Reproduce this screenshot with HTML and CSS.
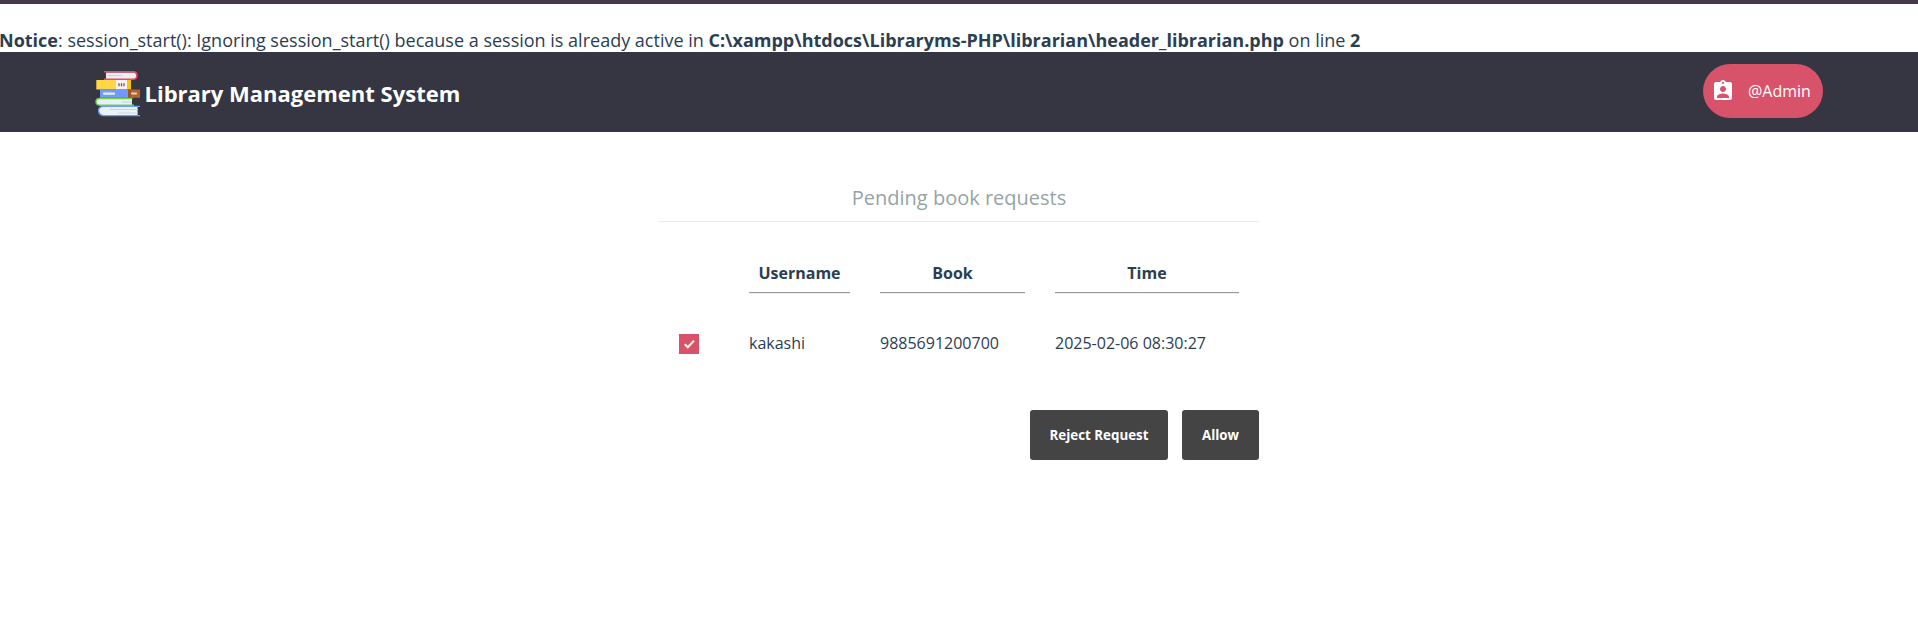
FILE: index.html
```html
<!DOCTYPE html>
<html lang="en">
<head>
<meta charset="utf-8">
<title>Library Management System</title>
<link rel="stylesheet" href="styles.css">
</head>
<body>
<div class="notice"><b>Notice</b>: session_start(): Ignoring session_start() because a session is already active in <b>C:\xampp\htdocs\Libraryms-PHP\librarian\header_librarian.php</b> on line <b>2</b></div>
<header class="header">
  <div class="brand">
    <svg class="logo" width="46" height="46" viewBox="0 0 46 46">
      <path d="M11 1.500H40Q42.500 5 40 8H11V1.500Z" fill="#e8eff6"/>
      <path d="M9 .7H38.500Q42 1 42 4.500T38.500 8.200H9" fill="none" stroke="#f2475f" stroke-width="1.500"/>
      <path d="M12 4.500H27" stroke="#c6d5e4" stroke-width="1"/>
      <path fill="#ffd643" d="M1.300 9H22v9.500H1.300z"/>
      <path fill="#fff1ed" d="M21 9h11v9.500H21z"/>
      <path fill="#fac600" d="M32 9h4v9.500h-4z"/>
      <path d="M24 12.300v3M26.500 12.300v3M29 12.300v3" stroke="#59606d" stroke-width="1.300"/>
      <path fill="#719aff" d="M5 18.500h28v8.300H5z"/>
      <path fill="#9b562e" d="M33 18.500h4v8.300h-4z"/>
      <path fill="#b2642f" d="M36 18.500h9v8.300h-9z"/>
      <rect x="8" y="21.500" width="12" height="2.200" rx="1" fill="#e8f1fc"/>
      <rect x="36" y="21.500" width="6" height="2" rx="1" fill="#f7cfba"/>
      <path fill="#e9f1f6" d="M5 27.300h32v7H5Q1 34 1 30.700q0-3.400 4-3.400z"/>
      <path d="M37.500 27.500H5Q1 27.500 1 30.700T5 34.300H39" fill="none" stroke="#70cf4c" stroke-width="1.400"/>
      <path d="M27 31h10" stroke="#c6d5e4" stroke-width="1.200"/>
      <path fill="#eaf2fa" d="M9 35.500h33.500v9H9q-5-1-5-5t5-4z"/>
      <path d="M45 35.300H8.500Q3.500 35.500 3.500 39.700T8.500 44.700H45" fill="none" stroke="#6b9cff" stroke-width="1.200"/>
      <path d="M15 38.500h28M23 42h20" stroke="#c6d5e4" stroke-width="1.200"/>
    </svg>
    <span class="title">Library Management System</span>
  </div>
  <div class="account">
    <svg width="24" height="24" viewBox="0 0 24 24" fill="#fff"><path d="M19 3h-4.180C14.400 1.840 13.300 1 12 1c-1.300 0-2.400.84-2.820 2H5c-1.100 0-2 .9-2 2v14c0 1.100.9 2 2 2h14c1.100 0 2-.9 2-2V5c0-1.100-.9-2-2-2zm-7 0c.55 0 1 .45 1 1s-.45 1-1 1-1-.45-1-1 .45-1 1-1zm0 4c1.660 0 3 1.340 3 3s-1.340 3-3 3-3-1.340-3-3 1.340-3 3-3zm6 12H6v-1.400c0-2 4-3.100 6-3.100s6 1.100 6 3.100V19z"/></svg>
    <span>@Admin</span>
  </div>
</header>
<main class="panel">
  <h1 class="legend">Pending book requests</h1>
  <div class="grid heads">
    <span></span>
    <span class="head">Username</span>
    <span class="head">Book</span>
    <span class="head">Time</span>
  </div>
  <div class="grid row">
    <span class="check"><svg width="20" height="20" viewBox="0 0 20 20"><path d="M5.800 10.300L8.800 13.300L15 6.600" fill="none" stroke="#fff" stroke-width="2"/></svg></span>
    <span>kakashi</span>
    <span>9885691200700</span>
    <span>2025-02-06 08:30:27</span>
  </div>
  <div class="actions">
    <button class="btn reject">Reject Request</button>
    <button class="btn allow">Allow</button>
  </div>
</main>
</body>
</html>
```

FILE: styles.css
```css
* { box-sizing: border-box; }
body {
  margin: 0;
  border-top: 4px solid #433a4c;
  background: #fff;
  color: #2c3e50;
  font-family: "Open Sans", "Liberation Sans", sans-serif;
  font-size: 16px;
}
.notice {
  height: 48px;
  padding-top: 24px;
  font-size: 18px;
  line-height: 24px;
  text-indent: -1px;
  white-space: nowrap;
}
.header {
  display: flex;
  justify-content: space-between;
  align-items: flex-start;
  height: 80px;
  padding: 12px 95px;
  background: #353642;
  color: #fff;
}
.brand { display: flex; padding-top: 7px; }
.logo { display: block; }
.title {
  margin-left: 3.5px;
  padding-top: 7px;
  font-size: 22px;
  font-weight: 700;
  line-height: 30px;
}
.account {
  display: flex;
  align-items: center;
  width: 120px;
  height: 54px;
  padding-left: 8px;
  gap: 13px;
  border-radius: 27px;
  background: #d8526a;
}
.panel { width: 600px; margin: 0 auto; padding-top: 50px; }
.legend {
  height: 40px;
  margin: 0;
  border-bottom: 1px solid #ebebeb;
  color: #95a5a6;
  font-size: 20px;
  font-weight: 400;
  line-height: 32px;
  text-align: center;
}
.grid {
  display: grid;
  grid-template-columns: 40px 101px 145px 184px;
  column-gap: 30px;
  padding-left: 20px;
}
.heads { margin-top: 39px; }
.head {
  height: 33px;
  border-bottom: 1px solid #eee;
  box-shadow: inset 0 -1px #999;
  font-weight: 700;
  line-height: 24px;
  text-align: center;
}
.row { margin-top: 37px; line-height: 24px; white-space: nowrap; }
.check {
  width: 20px;
  height: 20px;
  margin-top: 3px;
  background: #d8526a;
}
.check svg { display: block; }
.actions { display: flex; justify-content: flex-end; gap: 14px; margin-top: 55px; }
.btn {
  height: 50px;
  padding: 0;
  border: 0;
  border-radius: 3px;
  background: #444;
  color: #fff;
  font: 700 13.333px "Open Sans", "Liberation Sans", sans-serif;
}
.reject { width: 138px; }
.allow { width: 77px; }
```
